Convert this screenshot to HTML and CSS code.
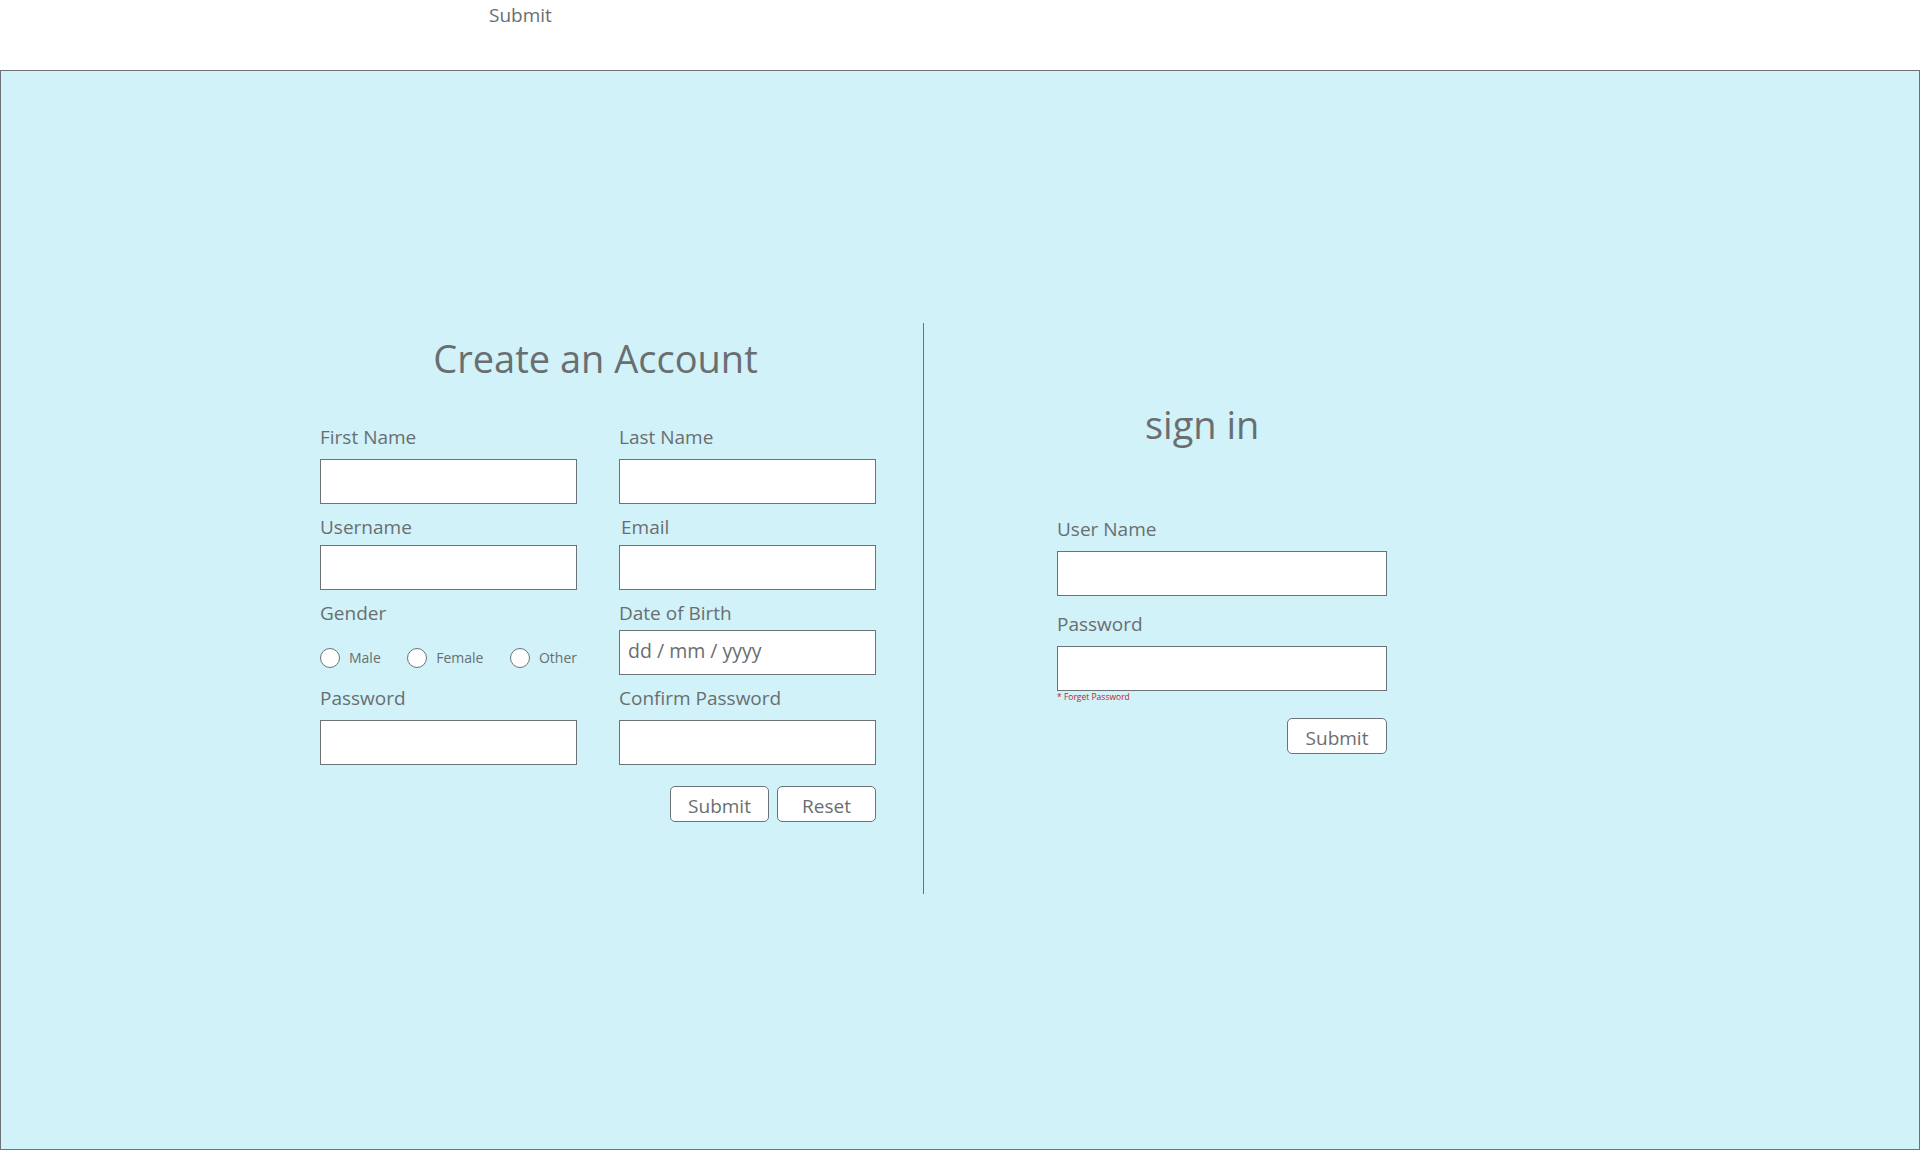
FILE: index.html
```html
<!DOCTYPE html>
<html>
<head>
<meta charset="utf-8">
<link rel="stylesheet" href="styles.css">
</head>
<body>
<div class="topbar"><span class="top-submit">Submit</span></div>
<main class="panel">
  <section class="register">
    <h1 class="title register-title">Create an Account</h1>
    <div class="grid">
      <div class="field row1">
        <label class="label">First Name</label>
        <input class="input" type="text">
      </div>
      <div class="field row1">
        <label class="label">Last Name</label>
        <input class="input" type="text">
      </div>
      <div class="field row2">
        <label class="label">Username</label>
        <input class="input" type="text">
      </div>
      <div class="field row2">
        <label class="label label-shift">Email</label>
        <input class="input" type="text">
      </div>
      <div class="field row3">
        <label class="label">Gender</label>
        <div class="radios">
          <label class="radio"><span class="dot"></span>Male</label>
          <label class="radio"><span class="dot"></span>Female</label>
          <label class="radio"><span class="dot"></span>Other</label>
        </div>
      </div>
      <div class="field row3">
        <label class="label">Date of Birth</label>
        <input class="input date" type="text" placeholder="dd / mm / yyyy">
      </div>
      <div class="field row4">
        <label class="label">Password</label>
        <input class="input" type="password">
      </div>
      <div class="field row4">
        <label class="label">Confirm Password</label>
        <input class="input" type="password">
      </div>
    </div>
    <div class="actions">
      <button class="btn">Submit</button>
      <button class="btn">Reset</button>
    </div>
  </section>
  <div class="divider"></div>
  <section class="signin">
    <h1 class="title signin-title">sign in</h1>
    <div class="field user-field">
      <label class="label">User Name</label>
      <input class="input wide" type="text">
    </div>
    <div class="field pass-field">
      <label class="label">Password</label>
      <input class="input wide" type="password">
      <span class="forget">* Forget Password</span>
    </div>
    <div class="actions signin-actions">
      <button class="btn">Submit</button>
    </div>
  </section>
</main>
</body>
</html>
```
FILE: styles.css
```css
* { box-sizing: border-box; }
html, body { margin: 0; padding: 0; }
body {
  font-family: "Open Sans", "Noto Sans", sans-serif;
  color: #6a6e70;
  background: #ffffff;
  width: 1920px;
  height: 1150px;
  overflow: hidden;
}
.topbar {
  height: 70px;
  padding-left: 489px;
  padding-top: 2px;
}
.top-submit {
  font-size: 19px;
  line-height: 26px;
  color: #6a6e70;
}
.panel {
  height: 1080px;
  border: 1px solid #6b7377;
  background: #d0f2f8;
  display: flex;
  align-items: flex-start;
  padding-top: 252px;
  padding-left: 319px;
}
.register { width: 556px; }
.title {
  margin: 0;
  font-weight: 400;
  font-size: 38px;
  line-height: 50px;
  text-align: center;
  color: #6a6e70;
  padding-top: 11px;
}
.register-title {
  padding-top: 10px;
  padding-bottom: 1px;
  padding-right: 5px;
}
.grid {
  margin-top: 40px;
  display: grid;
  grid-template-columns: 257px 257px;
  column-gap: 42px;
}
.field { display: flex; flex-direction: column; }
.label {
  font-size: 19px;
  line-height: 26px;
  height: 26px;
  margin-bottom: 9px;
  color: #6a6e70;
}
.row2 .label { margin-bottom: 5px; }
.row3 .label { margin-bottom: 4px; }
.row4 .label { margin-bottom: 9px; }
.label-shift { padding-left: 2px; }
.input {
  width: 257px;
  height: 45px;
  border: 1px solid #6b7377;
  background: #ffffff;
  margin: 0 0 10px 0;
  padding: 0 8px;
  font-family: inherit;
  font-size: 19.5px;
  color: #6a6e70;
  outline: none;
}
.row4 .input { margin-bottom: 0; }
.input.date::placeholder { color: #6a6e70; opacity: 1; }
.input.date { padding-bottom: 5px; }
.radios {
  display: flex;
  justify-content: space-between;
  align-items: center;
  height: 45px;
  padding-top: 11px;
  margin-bottom: 10px;
}
.radio {
  display: flex;
  align-items: center;
  font-size: 14px;
  line-height: 20px;
}
.dot {
  width: 20px;
  height: 20px;
  border: 1px solid #6b7377;
  border-radius: 50%;
  background: #ffffff;
  margin-right: 9px;
}
.actions {
  display: flex;
  justify-content: flex-end;
  gap: 8px;
  margin-top: 21px;
}
.btn {
  width: 99px;
  height: 36px;
  border: 1px solid #6b7377;
  border-radius: 5px;
  background: #ffffff;
  font-family: inherit;
  font-size: 19px;
  color: #6a6e70;
  padding: 3px 0 0 0;
}
.divider {
  width: 1px;
  height: 571px;
  background: #6b7377;
  margin-left: 47px;
}
.signin {
  margin-left: 133px;
  width: 330px;
}
.signin-title {
  text-align: left;
  padding-left: 88px;
  padding-top: 76px;
}
.user-field { margin-top: 67px; }
.wide { width: 330px; }
.user-field .input { margin-bottom: 15px; }
.pass-field .input { margin-bottom: 0; }
.forget {
  font-size: 8.5px;
  color: #c0242b;
  line-height: 11px;
}
.signin-actions { margin-top: 16px; }
.signin-actions .btn { width: 100px; }
```
